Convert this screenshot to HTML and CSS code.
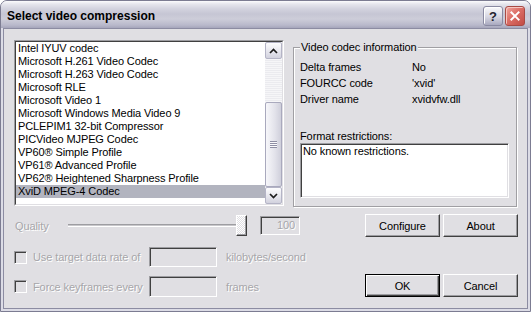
FILE: index.html
```html
<!DOCTYPE html>
<html lang="en">

<head>
    <meta charset="UTF-8">
    <title>Select video compression</title>
    <link rel="stylesheet" href="styles.css">
</head>

<body>
    <div class="window">
        <div class="titlebar">
            <span class="title">Select video compression</span>
            <div class="caption-buttons">
                <span class="cap-btn help">?</span>
                <span class="cap-btn close">
                    <svg width="20" height="20" viewBox="0 0 20 20">
                        <path d="M6 6 L14 14 M14 6 L6 14" stroke="#fff" stroke-width="2.2" stroke-linecap="square" fill="none"/>
                    </svg>
                </span>
            </div>
        </div>

        <div class="client">
            <div class="top">
                <div class="listbox">
                    <div class="listbox-inner">
                        <ul class="items">
                            <li>Intel IYUV codec</li>
                            <li>Microsoft H.261 Video Codec</li>
                            <li>Microsoft H.263 Video Codec</li>
                            <li>Microsoft RLE</li>
                            <li>Microsoft Video 1</li>
                            <li>Microsoft Windows Media Video 9</li>
                            <li>PCLEPIM1 32-bit Compressor</li>
                            <li>PICVideo MJPEG Codec</li>
                            <li>VP60® Simple Profile</li>
                            <li>VP61® Advanced Profile</li>
                            <li>VP62® Heightened Sharpness Profile</li>
                            <li class="selected">XviD MPEG-4 Codec</li>
                        </ul>
                        <div class="scrollbar">
                            <div class="sb-btn">
                                <svg width="9" height="6" viewBox="0 0 9 6"><path d="M1 5 L4.5 1.5 L8 5" stroke="#1c1c1c" stroke-width="1.7" fill="none"/></svg>
                            </div>
                            <div class="sb-track">
                                <div class="sb-thumb"><span class="grip"></span></div>
                            </div>
                            <div class="sb-btn">
                                <svg width="9" height="6" viewBox="0 0 9 6"><path d="M1 1 L4.5 4.5 L8 1" stroke="#1c1c1c" stroke-width="1.7" fill="none"/></svg>
                            </div>
                        </div>
                    </div>
                </div>

                <div class="group">
                    <span class="group-label">Video codec information</span>
                    <div class="info-row"><span class="info-key">Delta frames</span><span>No</span></div>
                    <div class="info-row"><span class="info-key">FOURCC code</span><span>'xvid'</span></div>
                    <div class="info-row"><span class="info-key">Driver name</span><span>xvidvfw.dll</span></div>
                    <div class="restrict-label">Format restrictions:</div>
                    <div class="restrict-box">No known restrictions.</div>
                </div>
            </div>

            <div class="bottom">
                <div class="options">
                    <div class="row row-quality">
                        <span class="quality-label disabled">Quality</span>
                        <div class="slider">
                            <div class="track"></div>
                            <div class="thumb"></div>
                        </div>
                        <div class="edit edit-quality disabled">100</div>
                    </div>
                    <div class="row row-rate">
                        <span class="checkbox"></span>
                        <span class="check-label disabled">Use target data rate of</span>
                        <div class="edit edit-wide"></div>
                        <span class="unit disabled">kilobytes/second</span>
                    </div>
                    <div class="row row-keys">
                        <span class="checkbox"></span>
                        <span class="check-label disabled">Force keyframes every</span>
                        <div class="edit edit-wide"></div>
                        <span class="unit disabled">frames</span>
                    </div>
                </div>

                <div class="buttons">
                    <button class="btn">Configure</button>
                    <button class="btn">About</button>
                    <button class="btn default">OK</button>
                    <button class="btn">Cancel</button>
                </div>
            </div>
        </div>
    </div>
</body>

</html>
```

FILE: styles.css
```css
body {
    margin: 0;
    background: #fff;
    font-family: "Liberation Sans", Arial, sans-serif;
    font-size: 11px;
    letter-spacing: -0.1px;
    color: #000;
}

.window {
    width: 531px;
    height: 312px;
    box-sizing: border-box;
    border: 1px solid #7c7c92;
    border-radius: 7px 7px 0 0;
    background: #dcdce6;
    display: flex;
    flex-direction: column;
    overflow: hidden;
}

/* title bar */
.titlebar {
    height: 27px;
    flex: none;
    display: flex;
    align-items: flex-start;
    justify-content: space-between;
    padding: 0 5px 0 6px;
    background: linear-gradient(#fcfcfd 0, #e6e6ed 3px, #d2d2de 8px, #c6c6d4 13px, #cdcdd9 18px, #b9b9cb 24px, #a6a6bb 27px);
}

.title {
    font-weight: bold;
    font-size: 12px;
    letter-spacing: 0;
    line-height: 15px;
    margin-top: 8px;
    color: #000;
}

.caption-buttons {
    display: flex;
    gap: 2px;
    margin-top: 5px;
}

.cap-btn {
    width: 20px;
    height: 20px;
    box-sizing: border-box;
    border-radius: 3px;
    display: flex;
    justify-content: center;
    align-items: center;
}

.help {
    border: 1px solid #8a8aa2;
    background: linear-gradient(#fafafc, #d6d6e2 55%, #a9a9bf);
    box-shadow: inset 1px 1px 0 #fff;
    color: #23232e;
    font-weight: bold;
    font-size: 13px;
}

.close {
    border: 1px solid #a84a44;
    background: linear-gradient(135deg, #f1a79f, #dc6e66 45%, #c24c45);
    box-shadow: inset 1px 1px 0 #f6c6c0;
}

/* client area */
.client {
    flex: 1;
    margin: 0 2px 2px;
    border: 1px solid #8c8ca2;
    background: #e0dfe3;
    padding: 11px 9px 0 10px;
}

.top {
    display: flex;
    align-items: flex-start;
}

.listbox {
    width: 270px;
    height: 166px;
    box-sizing: border-box;
    border: 1px solid;
    border-color: #9d9da1 #fff #fff #9d9da1;
}

.listbox-inner {
    height: 100%;
    box-sizing: border-box;
    border: 1px solid;
    border-color: #404040 #e0dfe3 #e0dfe3 #404040;
    background: #fff;
    display: flex;
}

.items {
    flex: 1;
    list-style: none;
    margin: 0;
    padding: 0;
    overflow: hidden;
}

.items li {
    height: 13px;
    line-height: 13px;
    padding-left: 2px;
    white-space: nowrap;
}

.items li.selected {
    background: #b2b4bf;
}

.scrollbar {
    width: 17px;
    display: flex;
    flex-direction: column;
    background: #f3f3f6;
}

.sb-btn {
    height: 17px;
    flex: none;
    box-sizing: border-box;
    border: 1px solid #b4b4c6;
    border-radius: 2px;
    background: linear-gradient(#fdfdfe, #e4e4ec 60%, #d2d2de);
    display: flex;
    justify-content: center;
    align-items: center;
}

.sb-track {
    flex: 1;
    display: flex;
    flex-direction: column;
    background: repeating-linear-gradient(#f6f6f8 0 1px, #ebebef 1px 2px);
}

.sb-thumb {
    margin-top: auto;
    height: 85px;
    box-sizing: border-box;
    border: 1px solid #a9a9bd;
    border-radius: 2px;
    background: linear-gradient(to right, #f7f7fa, #e2e2ea 60%, #cfcfdb);
    display: flex;
    justify-content: center;
    align-items: center;
}

.grip {
    width: 7px;
    height: 7px;
    background: repeating-linear-gradient(#8e8ea4 0 1px, #fafafc 1px 2px);
}

/* group box */
.group {
    position: relative;
    margin: 7px 0 0 9px;
    width: 224px;
    height: 160px;
    box-sizing: border-box;
    border: 1px solid #a09fa3;
    box-shadow: 1px 1px 0 #fff, inset 1px 1px 0 #fff;
    padding: 11px 0 0 6px;
}

.group-label {
    position: absolute;
    top: -7px;
    left: 6px;
    padding: 0 1px;
    line-height: 13px;
    background: #e0dfe3;
}

.info-row {
    display: flex;
    line-height: 16px;
}

.info-key {
    width: 112px;
}

.restrict-label {
    margin-top: 23px;
    line-height: 13px;
}

.restrict-box {
    width: 209px;
    height: 55px;
    box-sizing: border-box;
    border: 1px solid;
    border-color: #9d9da1 #fff #fff #9d9da1;
    box-shadow: inset 1px 1px 0 #404040, inset -1px -1px 0 #e0dfe3;
    background: #fff;
    padding: 1px 2px;
    line-height: 13px;
}

/* lower part */
.bottom {
    display: flex;
    margin-top: 7px;
}

.options {
    display: flex;
    flex-direction: column;
}

.row {
    display: flex;
    align-items: center;
}

.row-quality {
    height: 23px;
}

.row-rate {
    height: 20px;
    margin-top: 10px;
}

.row-keys {
    height: 21px;
    margin-top: 9px;
}

.disabled {
    color: #a7a6aa;
    text-shadow: 1px 1px 0 #fff;
}

.quality-label {
    width: 53px;
    padding-left: 1px;
}

.slider {
    position: relative;
    width: 179px;
    height: 21px;
}

.track {
    position: absolute;
    left: 0;
    right: 2px;
    top: 9px;
    height: 1px;
    border-top: 1px solid #9d9da1;
    border-bottom: 1px solid #fff;
    background: #c8c7cb;
}

.thumb {
    position: absolute;
    right: 0;
    top: 0;
    width: 11px;
    height: 21px;
    box-sizing: border-box;
    border: 1px solid;
    border-color: #fff #404040 #404040 #fff;
    box-shadow: inset -1px -1px 0 #9d9da1;
    background: repeating-conic-gradient(#fff 0 25%, #e0dfe3 0 50%) 0 0 / 2px 2px;
}

.edit {
    box-sizing: border-box;
    border: 1px solid;
    border-color: #9d9da1 #fff #fff #9d9da1;
    box-shadow: inset 1px 1px 0 #404040, inset -1px -1px 0 #e0dfe3;
    background: #e0dfe3;
}

.edit-quality {
    margin-left: 13px;
    width: 40px;
    height: 19px;
    line-height: 17px;
    text-align: right;
    padding-right: 4px;
}

.edit-wide {
    width: 68px;
    height: 100%;
}

.checkbox {
    width: 13px;
    height: 13px;
    box-sizing: border-box;
    border: 1px solid;
    border-color: #9d9da1 #fff #fff #9d9da1;
    box-shadow: inset 1px 1px 0 #404040, inset -1px -1px 0 #e0dfe3;
    background: #e0dfe3;
    margin-right: 6px;
}

.check-label {
    width: 116px;
}

.unit {
    margin-left: 9px;
}

.buttons {
    margin-left: auto;
    display: grid;
    grid-template-columns: 75px 75px;
    grid-auto-rows: 23px;
    column-gap: 3px;
    row-gap: 37px;
}

.btn {
    margin: 0;
    padding: 0;
    font-family: inherit;
    font-size: 11px;
    letter-spacing: -0.1px;
    color: #000;
    background: #e0dfe3;
    border: 1px solid;
    border-color: #fff #404040 #404040 #fff;
    box-shadow: inset -1px -1px 0 #9d9da1;
}

.btn.default {
    border-color: #000;
    box-shadow: inset 1px 1px 0 #fff, inset -1px -1px 0 #404040, inset -2px -2px 0 #9d9da1;
}
```
